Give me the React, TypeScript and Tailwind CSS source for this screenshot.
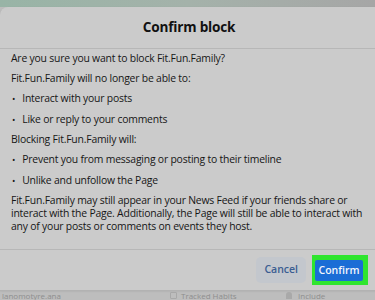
import React from 'react';

const font = { fontFamily: '"Open Sans", "Noto Sans", sans-serif' };

const blockedActions = ['Interact with your posts', 'Like or reply to your comments'];
const blockingEffects = ['Prevent you from messaging or posting to their timeline', 'Unlike and unfollow the Page'];

const Bullet: React.FC<{ text: string }> = ({ text }) => (
  <li className="flex items-center gap-[7px] pl-[1px]">
    <span className="text-[9px] leading-[13px]">•</span>
    <span>{text}</span>
  </li>
);

const App: React.FC = () => {
  return (
    <div className="relative h-[300px] w-[375px] overflow-hidden bg-[#bdbdbd]" style={font}>
      {/* dimmed page behind the dialog */}
      <div className="h-[7px] w-full bg-gradient-to-r from-[#98b4a6] via-[#a4b2aa] to-[#a6a6a6]" />

      <div className="flex h-[283px] w-[378px] flex-col rounded-tl-[8px] bg-[#cbcbcb] text-[#161616] shadow-[0_1px_2px_rgba(0,0,0,0.15)]">
        <header className="flex h-[42px] items-center justify-center border-b border-[#b7b7b7]">
          <h1 className="text-[13.6px] font-bold tracking-[-0.2px] text-[#111]">Confirm block</h1>
        </header>

        <div className="flex flex-1 flex-col gap-[6.7px] px-[11px] pt-[3px] text-[10.4px] leading-[13.3px] tracking-[-0.2px]">
          <p>Are you sure you want to block Fit.Fun.Family?</p>
          <p>Fit.Fun.Family will no longer be able to:</p>
          <ul className="flex flex-col gap-[7.5px]">
            {blockedActions.map((item) => (
              <Bullet key={item} text={item} />
            ))}
          </ul>
          <p>Blocking Fit.Fun.Family will:</p>
          <ul className="flex flex-col gap-[7.5px]">
            {blockingEffects.map((item) => (
              <Bullet key={item} text={item} />
            ))}
          </ul>
          <p>
            Fit.Fun.Family may still appear in your News Feed if your friends share or interact with the Page.
            Additionally, the Page will still be able to interact with any of your posts or comments on events they
            host.
          </p>
        </div>

        <footer className="flex h-[41px] items-center justify-end gap-[6px] border-t border-[#b7b7b7] pr-[10px]">
          <button
            type="button"
            className="h-[26px] rounded-[5px] bg-[#c3c7cd] px-[8px] text-[10.5px] font-semibold text-[#3a5d92]"
          >
            Cancel
          </button>
          <div className="flex items-center bg-[#2fe52f] pb-[4px] pl-[3px] pr-[5px] pt-[5px]">
            <button
              type="button"
              className="h-[21px] w-[48px] rounded-[2px] bg-[#1a6dd6] text-[10.5px] font-semibold text-[#f2f6fc]"
            >
              Confirm
            </button>
          </div>
        </footer>
      </div>

      <div className="flex h-[10px] items-center border-t border-[#b2b2b2] text-[8px] leading-none text-[#8e8e8e]">
        <span className="w-[170px] pl-[2px]">lanomotyre.ana</span>
        <span className="mr-[4px] h-[7px] w-[7px] rounded-[1px] border border-[#a8a8a8]" />
        <span className="w-[105px]">Tracked Habits</span>
        <span className="mr-[6px] h-[7px] w-[6px] rounded-t-full bg-[#a9a9a9]" />
        <span>Include</span>
      </div>
    </div>
  );
};

export default App;
